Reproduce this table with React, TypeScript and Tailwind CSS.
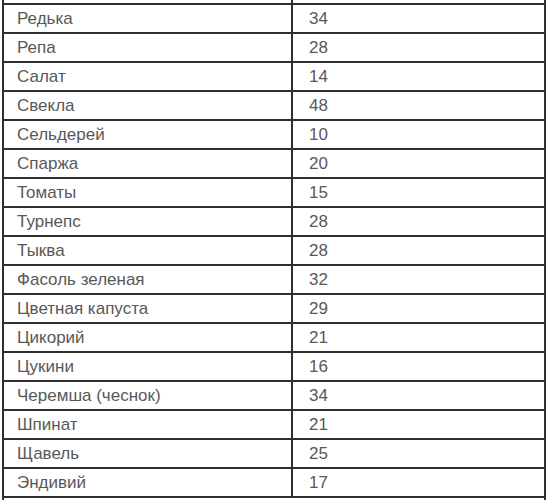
import React from "react";

const ROWS: [string, string][] = [
  ["Редька", "34"],
  ["Репа", "28"],
  ["Салат", "14"],
  ["Свекла", "48"],
  ["Сельдерей", "10"],
  ["Спаржа", "20"],
  ["Томаты", "15"],
  ["Турнепс", "28"],
  ["Тыква", "28"],
  ["Фасоль зеленая", "32"],
  ["Цветная капуста", "29"],
  ["Цикорий", "21"],
  ["Цукини", "16"],
  ["Черемша (чеснок)", "34"],
  ["Шпинат", "21"],
  ["Щавель", "25"],
  ["Эндивий", "17"],
];

export default function App() {
  return (
    <div className="h-[500px] w-[550px] overflow-hidden bg-white pl-[2px] font-['Liberation_Sans',Arial,sans-serif]">
      <div className="w-[544px] border-x-2 border-[#2e2e2e]">
        <div className="flex h-[3px]">
          <div className="w-[289px] border-r-2 border-[#2e2e2e]" />
        </div>
        {ROWS.map(([name, value], index) => (
          <div
            key={index}
            className="flex h-[29px] items-center border-t-2 border-[#2e2e2e] text-[17px] text-[#585858]"
          >
            <div className="flex h-full w-[289px] items-center border-r-2 border-[#2e2e2e] pl-[13px]">
              {name}
            </div>
            <div className="flex h-full flex-1 items-center pl-[16px]">{value}</div>
          </div>
        ))}
        <div className="h-[10px] border-t-2 border-[#2e2e2e]" />
      </div>
    </div>
  );
}
